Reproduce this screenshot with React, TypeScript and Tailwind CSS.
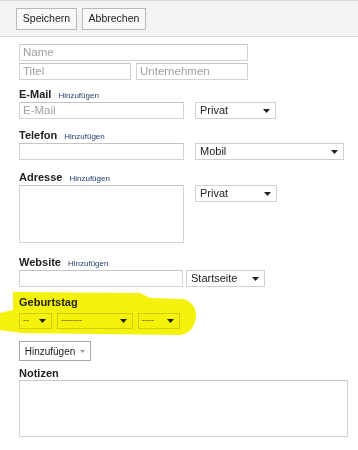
import React from "react";

function Label({ title, link }: { title: string; link?: boolean }) {
  return (
    <div className="flex items-baseline gap-[7px] h-[14px] leading-[14px]">
      <span className="text-[11px] font-bold text-[#222]">{title}</span>
      {link && <span className="text-[8px] text-[#23406f]">Hinzufügen</span>}
    </div>
  );
}

function Field({ w, text, h = "h-[17px]" }: { w: string; text?: string; h?: string }) {
  return (
    <div
      className={`${w} ${h} border border-[#d4d4d4] border-t-[#c4c4c4] bg-white px-[3px] text-[11.5px] leading-[15px] text-[#a0a0a0]`}
    >
      {text}
    </div>
  );
}

function Select({ w, text }: { w: string; text: string }) {
  return (
    <div
      className={`${w} h-[17px] flex items-center justify-between border border-[#d0d0d0] bg-white pl-[4px] pr-[5px] text-[11px] text-[#222]`}
    >
      <span>{text}</span>
      <svg width="7" height="4" viewBox="0 0 7 4">
        <path d="M0 0 H7 L3.5 4 Z" fill="#222" />
      </svg>
    </div>
  );
}

function Small({ w, text }: { w: string; text: string }) {
  return (
    <div
      className={`${w} h-[16px] flex items-center justify-between border border-[#d8d8b0] pl-[3px] pr-[5px] text-[9px] text-[#555]`}
    >
      <span>{text}</span>
      <svg width="7" height="4" viewBox="0 0 7 4">
        <path d="M0 0 H7 L3.5 4 Z" fill="#222" />
      </svg>
    </div>
  );
}

export default function App() {
  return (
    <div
      className="relative w-[358px] h-[450px] overflow-hidden bg-white"
      style={{ fontFamily: '"Liberation Sans", Arial, sans-serif' }}
    >
      {/* toolbar */}
      <div className="h-[37px] flex items-center gap-[5px] pl-[16px] bg-[#f3f3f3] border-t border-b border-[#d6d6d6]">
        <button className="h-[22px] w-[61px] border border-[#b8b8b8] bg-[#f8f8f8] text-[10.5px] text-[#222]">
          Speichern
        </button>
        <button className="h-[22px] w-[64px] border border-[#b8b8b8] bg-[#f8f8f8] text-[10.5px] text-[#222]">
          Abbrechen
        </button>
      </div>

      <div className="pl-[19px] pt-[7px]">
        <div className="flex flex-col gap-[2px]">
          <Field w="w-[229px]" text="Name" />
          <div className="flex gap-[5px]">
            <Field w="w-[112px]" text="Titel" />
            <Field w="w-[112px]" text="Unternehmen" />
          </div>
        </div>

        <div className="mt-[7px]">
          <Label title="E-Mail" link />
          <div className="mt-[1px] flex gap-[11px]">
            <Field w="w-[165px]" text="E-Mail" />
            <Select w="w-[81px]" text="Privat" />
          </div>
        </div>

        <div className="mt-[9px]">
          <Label title="Telefon" link />
          <div className="mt-[1px] flex gap-[11px]">
            <Field w="w-[165px]" />
            <Select w="w-[149px]" text="Mobil" />
          </div>
        </div>

        <div className="mt-[10px]">
          <Label title="Adresse" link />
          <div className="mt-[1px] flex gap-[11px] items-start">
            <Field w="w-[165px]" h="h-[58px]" />
            <Select w="w-[82px]" text="Privat" />
          </div>
        </div>

        <div className="mt-[12px]">
          <Label title="Website" link />
          <div className="mt-[1px] flex gap-[3px]">
            <Field w="w-[164px]" />
            <Select w="w-[79px]" text="Startseite" />
          </div>
        </div>

        <div className="mt-[8px]">
          <Label title="Geburtstag" />
          <div className="mt-[4px] flex gap-[5px]">
            <Small w="w-[33px]" text="--" />
            <Small w="w-[76px]" text="-------" />
            <Small w="w-[42px]" text="----" />
          </div>
        </div>

        <button className="mt-[12px] h-[20px] w-[72px] flex items-center justify-center gap-[5px] border border-[#a8a8a8] bg-white text-[10px] text-[#222]">
          Hinzufügen
          <svg width="5" height="3" viewBox="0 0 5 3">
            <path d="M0 0 H5 L2.5 3 Z" fill="#999" />
          </svg>
        </button>

        <div className="mt-[5px]">
          <Label title="Notizen" />
          <Field w="w-[329px]" h="h-[57px]" />
        </div>
      </div>

      {/* highlighter stroke */}
      <svg
        className="absolute left-0 top-0 mix-blend-multiply pointer-events-none"
        width="358"
        height="450"
        viewBox="0 0 358 450"
      >
        <path
          d="M13 292 L140 293 L150 298 L184 299 Q197 304 196 317 Q194 332 181 335 L22 333 L0 330 L0 313 L13 310 Z"
          fill="#f4f20a"
        />
      </svg>
    </div>
  );
}
